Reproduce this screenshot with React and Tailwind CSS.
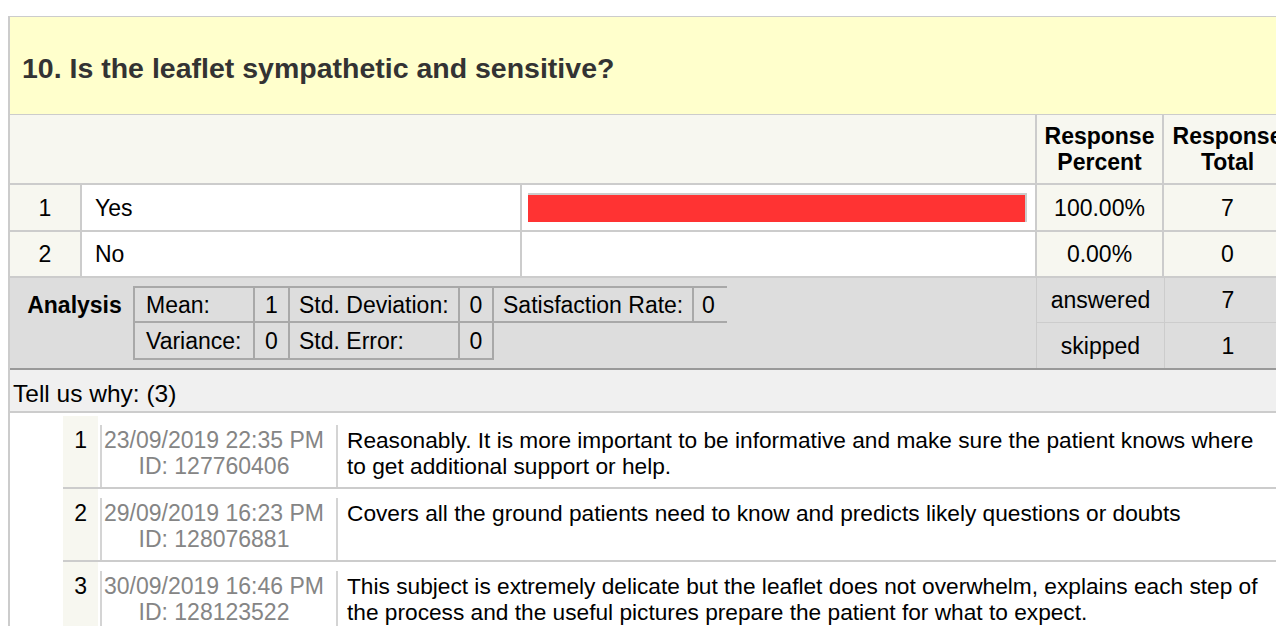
// Question result block: choices with bars, summary stats and free-text answers
const choices = [
  { id: 1, label: 'Yes', percent: 100, total: 7 },
  { id: 2, label: 'No', percent: 0, total: 0 },
]

const comments = [
  {
    id: 1,
    date: '23/09/2019 22:35 PM',
    respondent: '127760406',
    text: 'Reasonably. It is more important to be informative and make sure the patient knows where to get additional support or help.',
  },
  {
    id: 2,
    date: '29/09/2019 16:23 PM',
    respondent: '128076881',
    text: 'Covers all the ground patients need to know and predicts likely questions or doubts',
  },
  {
    id: 3,
    date: '30/09/2019 16:46 PM',
    respondent: '128123522',
    text: 'This subject is extremely delicate but the leaflet does not overwhelm, explains each step of the process and the useful pictures prepare the patient for what to expect.',
  },
]

function ChoiceRow({ choice, last }) {
  return (
    <div className={`flex border-b-2 border-[#ccc] ${last ? 'h-[46px]' : 'h-[47px]'}`}>
      <div className="flex w-[72px] items-center justify-center border-r-2 border-[#ccc] bg-[#f7f7f0]">{choice.id}</div>
      <div className="flex w-[440px] items-center border-r-2 border-[#ccc] bg-white pl-[13px]">{choice.label}</div>
      <div className="flex w-[515px] items-center border-r-2 border-[#ccc] bg-white pl-[6px]">
        <div className="h-[29px] w-[499px]">
          {choice.percent > 0 && (
            <div className="h-full border-t-2 border-r-2 border-[#ccc] bg-[#ff3333]" style={{ width: `${choice.percent}%` }} />
          )}
        </div>
      </div>
      <div className="flex w-[127px] items-center justify-center border-r-2 border-[#ccc] bg-[#f7f7f0]">{choice.percent.toFixed(2)}%</div>
      <div className="flex w-[127px] items-center justify-center bg-[#f7f7f0]">{choice.total}</div>
    </div>
  )
}

function Analysis() {
  return (
    <div className="flex h-[92px] border-b-2 border-[#999] bg-[#dddddd]">
      <div className="flex w-[1026px] items-start pt-[8px]">
        <div className="flex h-[37px] w-[123px] items-center justify-center pl-[6px] text-[23px] font-bold">Analysis</div>
        <div className="flex flex-col">
          <div className="flex h-[37px]">
            <div className="flex w-[120px] items-center border-y-2 border-l-2 border-[#a8a8a8] pl-[11px]">Mean:</div>
            <div className="flex w-[35px] items-center justify-center border-y-2 border-l-2 border-[#a8a8a8]">1</div>
            <div className="flex w-[170px] items-center border-y-2 border-l-2 border-[#a8a8a8] pl-[9px]">Std. Deviation:</div>
            <div className="flex w-[34px] items-center justify-center border-y-2 border-l-2 border-[#a8a8a8]">0</div>
            <div className="flex w-[200px] items-center border-y-2 border-l-2 border-[#a8a8a8] pl-[9px]">Satisfaction Rate:</div>
            <div className="flex w-[35px] items-center border-y-2 border-l-2 border-[#a8a8a8] pl-[8px]">0</div>
          </div>
          <div className="flex h-[37px]">
            <div className="flex w-[120px] items-center border-b-2 border-l-2 border-[#a8a8a8] pl-[11px]">Variance:</div>
            <div className="flex w-[35px] items-center justify-center border-b-2 border-l-2 border-[#a8a8a8]">0</div>
            <div className="flex w-[170px] items-center border-b-2 border-l-2 border-[#a8a8a8] pl-[9px]">Std. Error:</div>
            <div className="flex w-[36px] items-center justify-center border-x-2 border-b-2 border-[#a8a8a8]">0</div>
          </div>
        </div>
      </div>
      <div className="flex w-[128px] flex-col border-l border-[#ccc]">
        <div className="flex h-[45px] items-center justify-center border-b border-[#ccc]">answered</div>
        <div className="flex flex-1 items-center justify-center">skipped</div>
      </div>
      <div className="flex w-[127px] flex-col border-l border-[#ccc]">
        <div className="flex h-[45px] items-center justify-center border-b border-[#ccc]">7</div>
        <div className="flex flex-1 items-center justify-center">1</div>
      </div>
    </div>
  )
}

function CommentRow({ comment }) {
  return (
    <div className="flex h-[73px] border-b-2 border-[#ccc]">
      <div className="w-[35px] bg-[#f7f7f0] pt-[11px] pr-[11px] text-right">{comment.id}</div>
      <div className="flex pt-[9px]">
        <div className="ml-[2px] w-[236px] border-l-2 border-[#d4d4d4] pt-[2px] pr-[10px] text-center text-[#858585]">
          <div>{comment.date}</div>
          <div>ID: {comment.respondent}</div>
        </div>
        <div className="w-[927px] border-l-2 border-[#d4d4d4] pt-[2px] pl-[9px] text-[22.7px]">{comment.text}</div>
      </div>
    </div>
  )
}

export default function App() {
  return (
    <div className="h-screen w-screen overflow-hidden bg-white pt-4 pl-2 font-['Liberation_Sans',Arial,sans-serif] text-[23px] leading-[26px] text-black">
      <div className="w-[1300px] border-t border-l-2 border-[#ccc]">
        <div className="flex h-[98px] items-center border-b border-[#ccc] bg-[#ffffcc] pt-[5px] pl-[12px]">
          <h2 className="text-[28.5px] leading-[33px] font-bold text-[#333]">10. Is the leaflet sympathetic and sensitive?</h2>
        </div>

        <div className="flex h-[70px] border-b-2 border-[#ccc] bg-[#f7f7f0] text-[23px] font-bold">
          <div className="w-[1027px] border-r-2 border-[#ccc]" />
          <div className="flex w-[127px] items-center justify-center border-r-2 border-[#ccc] text-center">
            Response
            <br />
            Percent
          </div>
          <div className="flex w-[127px] items-center justify-center text-center">
            Response
            <br />
            Total
          </div>
        </div>

        {choices.map((choice, idx) => (
          <ChoiceRow key={choice.id} choice={choice} last={idx === choices.length - 1} />
        ))}

        <Analysis />

        <div className="h-[43px] border-b-2 border-[#ccc] bg-[#f0f0f0] pt-[11px] pl-[3px] text-[24.5px]">Tell us why: (3)</div>

        <div className="bg-white pt-[3px] pl-[53px]">
          {comments.map((comment) => (
            <CommentRow key={comment.id} comment={comment} />
          ))}
        </div>
      </div>
    </div>
  )
}
